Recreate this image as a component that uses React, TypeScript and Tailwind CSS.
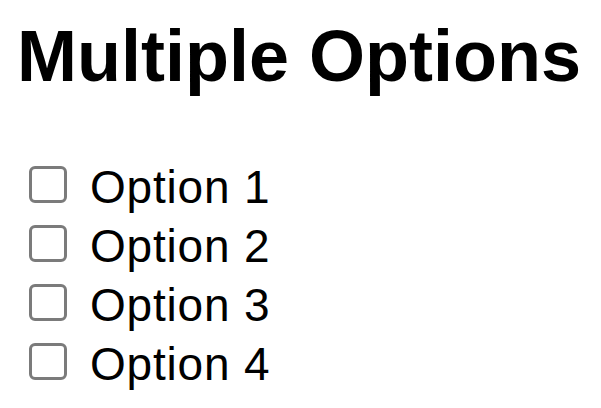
import React, { useState } from 'react';

const options = ['Option 1', 'Option 2', 'Option 3', 'Option 4'];

export default function App() {
  const [checked, setChecked] = useState<Record<string, boolean>>({});

  return (
    <div className="min-h-screen bg-white text-black font-['Liberation_Sans',Arial,sans-serif]">
      <h1 className="pl-[17px] pt-[15px] text-[72px] font-bold leading-[83px]">Multiple Options</h1>
      <div className="mt-[60px] flex flex-col pl-[29px]">
        {options.map((opt) => (
          <label key={opt} className="flex h-[59px] items-start">
            <input
              type="checkbox"
              checked={!!checked[opt]}
              onChange={(e) => setChecked({ ...checked, [opt]: e.target.checked })}
              className="mt-[8px] h-[37px] w-[38px] shrink-0 appearance-none rounded-[6px] border-[3px] border-[#7b7b7b] bg-white checked:bg-blue-600"
            />
            <span className="ml-[23px] text-[46px] leading-[59px] tracking-[0.8px]">{opt}</span>
          </label>
        ))}
      </div>
    </div>
  );
}
